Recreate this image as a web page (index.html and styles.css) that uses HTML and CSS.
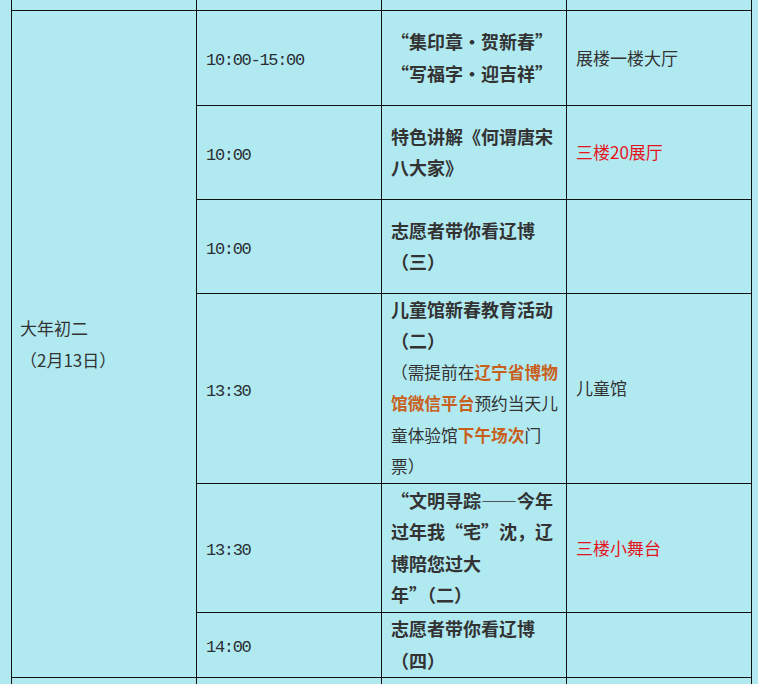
FILE: index.html
```html
<!DOCTYPE html>
<html lang="zh-CN">
<head>
<meta charset="utf-8">
<title>春节活动安排</title>
<link rel="stylesheet" href="styles.css">
</head>
<body>
<table class="sched">
  <colgroup><col class="c"><col class="c"><col class="c"><col class="c"></colgroup>
  <tr class="r0"><td></td><td></td><td></td><td></td></tr>
  <tr class="r1">
    <td rowspan="6" class="day">大年初二<br>（2月13日）</td>
    <td class="time">10:00-15:00</td>
    <td class="act">“集印章・贺新春”<br>“写福字・迎吉祥”</td>
    <td class="loc">展楼一楼大厅</td>
  </tr>
  <tr class="r2">
    <td class="time">10:00</td>
    <td class="act">特色讲解《何谓唐宋<br>八大家》</td>
    <td class="loc red">三楼20展厅</td>
  </tr>
  <tr class="r3">
    <td class="time">10:00</td>
    <td class="act">志愿者带你看辽博<br>（三）</td>
    <td class="loc"></td>
  </tr>
  <tr class="r4">
    <td class="time">13:30</td>
    <td class="act">儿童馆新春教育活动<br>（二）<div class="note">（需提前在<b class="hl">辽宁省博物</b><br><b class="hl">馆微信平台</b>预约当天儿<br>童体验馆<b class="hl">下午场次</b>门<br>票）</div></td>
    <td class="loc">儿童馆</td>
  </tr>
  <tr class="r5">
    <td class="time">13:30</td>
    <td class="act">“文明寻踪——今年<br>过年我“宅”沈，辽<br>博陪您过大<br>年”（二）</td>
    <td class="loc red">三楼小舞台</td>
  </tr>
  <tr class="r6">
    <td class="time">14:00</td>
    <td class="act">志愿者带你看辽博<br>（四）</td>
    <td class="loc"></td>
  </tr>
  <tr class="r7"><td></td><td></td><td></td><td></td></tr>
</table>
</body>
</html>
```

FILE: styles.css
```css
html, body {
  margin: 0;
  padding: 0;
}
body {
  background: #b1e9f1;
  font-family: "Noto Sans CJK SC", "Noto Sans", sans-serif;
  color: #333;
  height: 684px;
  overflow: hidden;
}
.sched {
  border-collapse: collapse;
  table-layout: fixed;
  width: 741px;
  margin-left: 11px;
}
.c { width: 185px; }
.sched td {
  border: 1px solid #111;
  padding: 0 9px;
  vertical-align: middle;
  white-space: nowrap;
  line-height: 31.5px;
}
.r0 td { border-top: 0; }
.r7 td { border-bottom: 0; }
.r0 { height: 10px; }
.r1 { height: 95px; }
.r2 { height: 94px; }
.r3 { height: 94px; }
.r4 { height: 190px; }
.r5 { height: 129px; }
.r6 { height: 65px; }
.r7 { height: 30px; }
.sched td.day {
  font-size: 17px;
  line-height: 32px;
  padding-left: 8px;
}
.sched td.time {
  font-family: "Liberation Mono", "DejaVu Sans Mono", monospace;
  font-size: 17px;
  letter-spacing: -1.3px;
  color: #2a2f33;
  padding-top: 7px;
}
.act {
  font-size: 18px;
  font-weight: bold;
  color: #333;
}
.note {
  font-size: 16.7px;
  font-weight: normal;
  line-height: 31.5px;
}
.hl {
  color: #c8601c;
  font-weight: bold;
}
.loc {
  font-size: 17px;
}
.red { color: #e5141c; }
```
